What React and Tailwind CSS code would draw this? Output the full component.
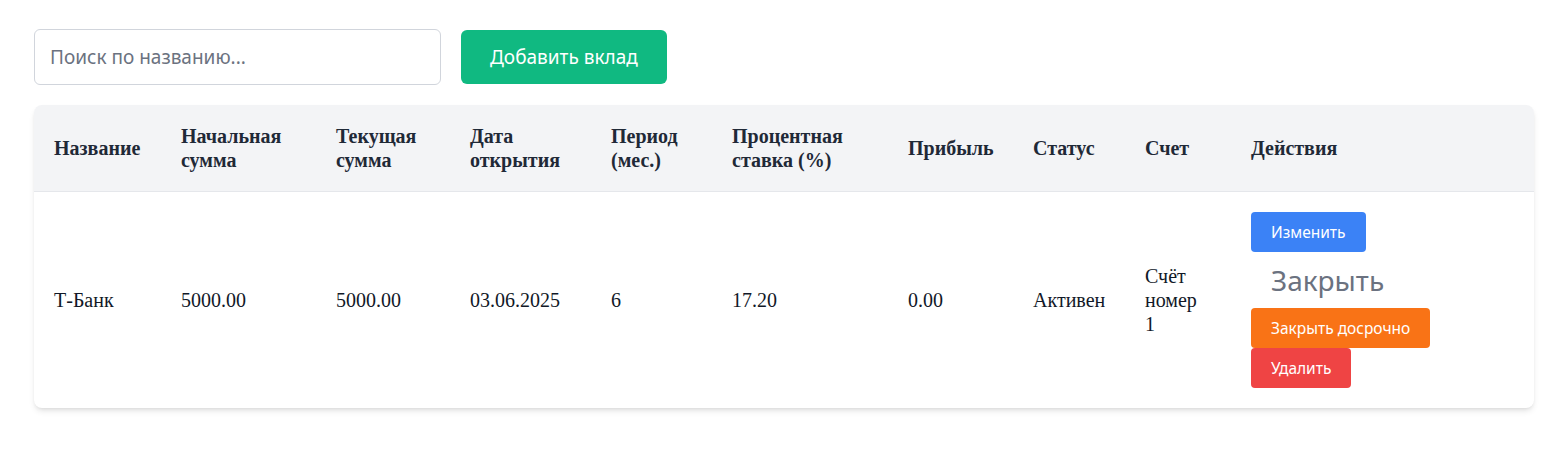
import React from 'react';

const cols = [
  { label: 'Название', w: 'w-[127px]' },
  { label: 'Начальная сумма', w: 'w-[155px]' },
  { label: 'Текущая сумма', w: 'w-[134px]' },
  { label: 'Дата открытия', w: 'w-[141px]' },
  { label: 'Период (мес.)', w: 'w-[121px]' },
  { label: 'Процентная ставка (%)', w: 'w-[176px]' },
  { label: 'Прибыль', w: 'w-[125px]' },
  { label: 'Статус', w: 'w-[112px]' },
  { label: 'Счет', w: 'w-[106px]' },
  { label: 'Действия', w: 'w-[303px]' },
];

const deposit = {
  name: 'Т-Банк',
  initial: '5000.00',
  current: '5000.00',
  opened: '03.06.2025',
  period: '6',
  rate: '17.20',
  profit: '0.00',
  status: 'Активен',
  account: 'Счёт номер 1',
};

const btn = "block h-10 px-5 rounded text-[15.5px] text-white font-['Noto_Sans',sans-serif]";

const App = () => {
  return (
    <div className="min-h-screen bg-white px-[34px] pt-[29px] font-['Liberation_Serif',serif]">
      <div className="flex items-center gap-5 mb-5">
        <input
          type="text"
          placeholder="Поиск по названию..."
          className="w-[407px] h-14 px-[15px] border border-gray-300 rounded-md text-[19px] text-gray-800 placeholder:text-[#6b7280] font-['Noto_Sans',sans-serif] outline-none"
        />
        <button className="h-[54px] px-[29px] rounded-md bg-[#10b981] text-white text-[19px] font-['Noto_Sans',sans-serif]">
          Добавить вклад
        </button>
      </div>

      <div className="w-[1500px] bg-white rounded-lg shadow-md overflow-hidden">
        <table className="w-full table-fixed border-collapse text-left">
          <thead className="bg-[#f3f4f6] border-b border-[#e5e7eb]">
            <tr>
              {cols.map((c) => (
                <th key={c.label} className={`${c.w} px-5 py-[19px] text-[20px] leading-6 font-bold text-[#1f2937]`}>
                  {c.label}
                </th>
              ))}
            </tr>
          </thead>
          <tbody>
            <tr className="text-[20px] leading-6 text-[#111827]">
              <td className="px-5 py-5 align-middle">{deposit.name}</td>
              <td className="px-5 py-5 align-middle">{deposit.initial}</td>
              <td className="px-5 py-5 align-middle">{deposit.current}</td>
              <td className="px-5 py-5 align-middle">{deposit.opened}</td>
              <td className="px-5 py-5 align-middle">{deposit.period}</td>
              <td className="px-5 py-5 align-middle">{deposit.rate}</td>
              <td className="px-5 py-5 align-middle">{deposit.profit}</td>
              <td className="px-5 py-5 align-middle">{deposit.status}</td>
              <td className="px-5 py-5 align-middle">{deposit.account}</td>
              <td className="px-5 py-5 align-middle">
                <button className={`${btn} bg-[#3b82f6]`}>Изменить</button>
                <div className="h-14 flex items-center px-5 text-[28px] text-[#6b7280] font-['Noto_Sans',sans-serif]">
                  Закрыть
                </div>
                <button className={`${btn} bg-[#f97316]`}>Закрыть досрочно</button>
                <button className={`${btn} bg-[#ef4444]`}>Удалить</button>
              </td>
            </tr>
          </tbody>
        </table>
      </div>
    </div>
  );
};

export default App;
